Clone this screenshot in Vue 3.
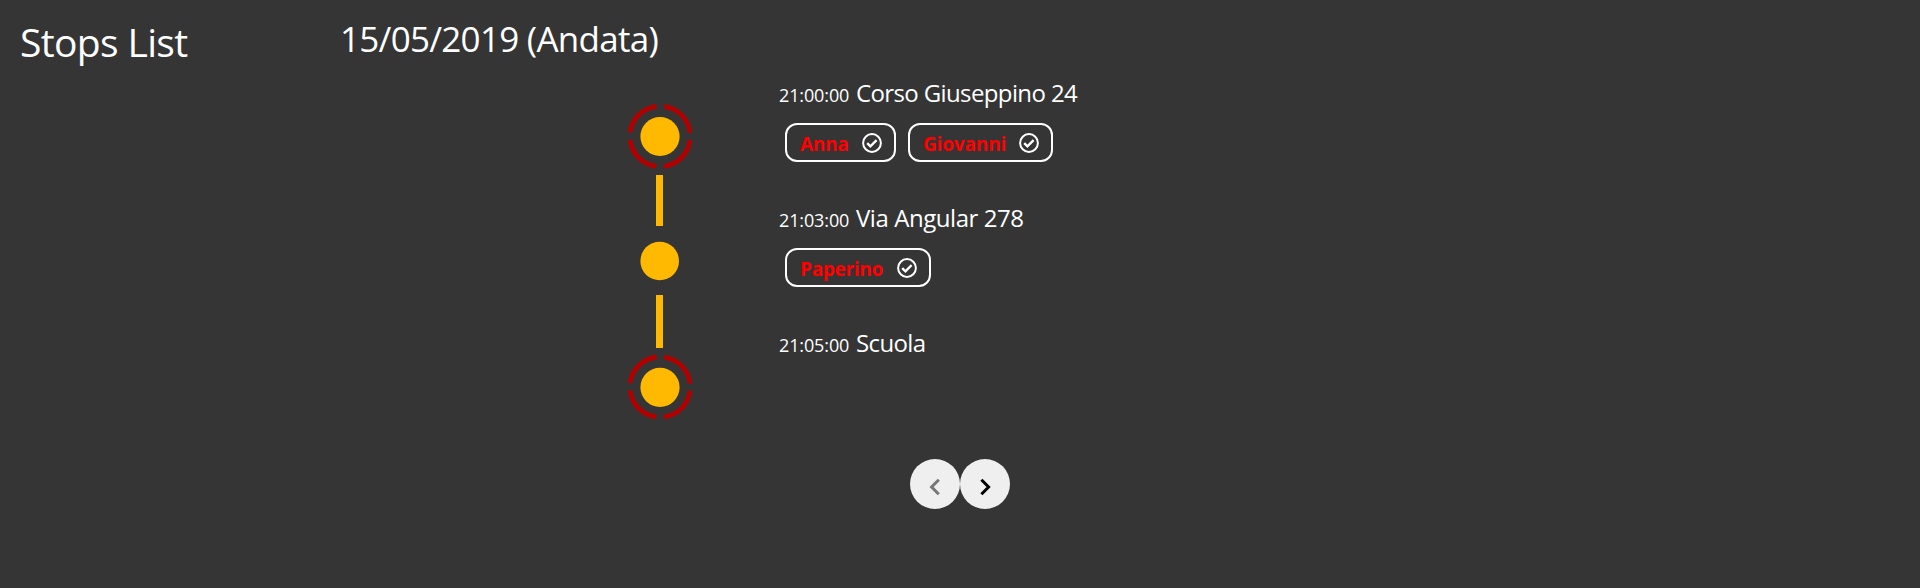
<script setup>
const stops = [
  { time: '21:00:00', name: 'Corso Giuseppino 24', cls: 'corso', people: ['Anna', 'Giovanni'] },
  { time: '21:03:00', name: 'Via Angular 278', cls: 'via', people: ['Paperino'] },
  { time: '21:05:00', name: 'Scuola', cls: 'scuola', people: [] },
]
</script>

<template>
  <div class="page">
    <aside class="side"><h1><span class="t-title">Stops List</span></h1></aside>
    <main class="main">
      <h2><span class="t-date">15/05/2019 (Andata)</span></h2>
      <div class="route">
        <svg class="line" width="80" height="344" viewBox="620 86 80 344">
          <g fill="#ffb900">
            <circle cx="660" cy="136.5" r="19.6" />
            <rect x="656" y="175" width="7" height="51" />
            <circle cx="659.7" cy="261" r="19.3" />
            <rect x="656" y="295" width="7" height="53" />
            <circle cx="660" cy="387.3" r="19.6" />
          </g>
          <g fill="none" stroke="#b00000" stroke-width="4.8" stroke-dasharray="39.9 7.54">
            <circle cx="660" cy="136.3" r="30.2" stroke-dashoffset="-3.77" />
            <circle cx="660" cy="387" r="30.2" stroke-dashoffset="-3.77" />
          </g>
        </svg>
        <div class="stops">
          <section v-for="s in stops" :key="s.time" class="stop">
            <div class="head">
              <span class="time">{{ s.time }}</span>
              <span class="name" :class="s.cls">{{ s.name }}</span>
            </div>
            <div class="people">
              <div v-for="p in s.people" :key="p" class="chip" :class="p.toLowerCase()">
                <span class="person">{{ p }}</span>
                <svg width="20" height="20" viewBox="0 0 20 20" fill="none" stroke="#fff">
                  <circle cx="10" cy="10" r="8.9" stroke-width="2" />
                  <path d="M5.2 10.1l3.2 3.2 6.2-6.2" stroke-width="2.4" />
                </svg>
              </div>
            </div>
          </section>
        </div>
      </div>
    </main>
    <nav class="pager">
      <button class="prev" disabled>
        <svg width="50" height="50" viewBox="0 0 50 50"><path d="M28.8 20.8l-7.2 7.2 7.2 7.2" /></svg>
      </button>
      <button class="next">
        <svg width="50" height="50" viewBox="0 0 50 50"><path d="M21.4 20.8l7.2 7.2-7.2 7.2" /></svg>
      </button>
    </nav>
  </div>
</template>

<style>
body {
  background: #353535;
}
</style>

<style scoped>
.page {
  height: 588px;
  box-sizing: border-box;
  display: grid;
  grid-template-columns: 320px 1fr;
  grid-template-rows: 459px 1fr;
  background: #353535;
  color: #fff;
  font-family: "Open Sans", "Noto Sans", sans-serif;
  overflow: hidden;
  white-space: nowrap;
}
h1, h2 {
  margin: 0;
  font-weight: 400;
}
h1 {
  padding: 12px 0 0 20px;
  font-size: 39px;
  line-height: 60px;
}
h2 {
  padding: 9px 0 1px 20px;
  font-size: 35px;
  line-height: 60px;
  height: 60px;
}
.t-title { letter-spacing: -0.65px; }
.t-date { letter-spacing: -0.73px; }
.route {
  display: flex;
  padding: 4px 0 0 300px;
}
.line {
  display: block;
  margin-top: 12px;
}
.stops {
  padding-left: 79px;
}
.stop {
  height: 125px;
}
.head {
  display: flex;
  align-items: baseline;
  height: 40px;
  line-height: 38px;
}
.time {
  width: 77px;
  font-size: 18px;
  letter-spacing: -0.12px;
}
.name {
  font-size: 24px;
  letter-spacing: -0.62px;
}
.name.via { letter-spacing: -0.44px; }
.people {
  display: flex;
  gap: 12px;
  margin: 9px 0 0 6px;
}
.chip {
  box-sizing: border-box;
  display: flex;
  align-items: center;
  justify-content: space-between;
  height: 39px;
  width: 146px;
  padding: 1px 12.5px 0 13px;
  border: 2px solid #fff;
  border-radius: 12px;
}
.chip.anna { width: 111px; }
.chip.giovanni { width: 145px; }
.person {
  color: #f00;
  font-size: 19px;
  font-weight: 700;
  line-height: 32px;
  padding-top: 2px;
  letter-spacing: -0.3px;
}
.giovanni .person { letter-spacing: -0.15px; }
.pager {
  grid-column: 1 / 3;
  display: flex;
  justify-content: center;
}
.pager button {
  width: 50px;
  height: 50px;
  padding: 0;
  border: 0;
  border-radius: 50%;
  background: #efefef;
}
.pager svg {
  display: block;
  fill: none;
  stroke: #000;
  stroke-width: 3;
}
.pager .prev svg { stroke: #777; }
</style>
